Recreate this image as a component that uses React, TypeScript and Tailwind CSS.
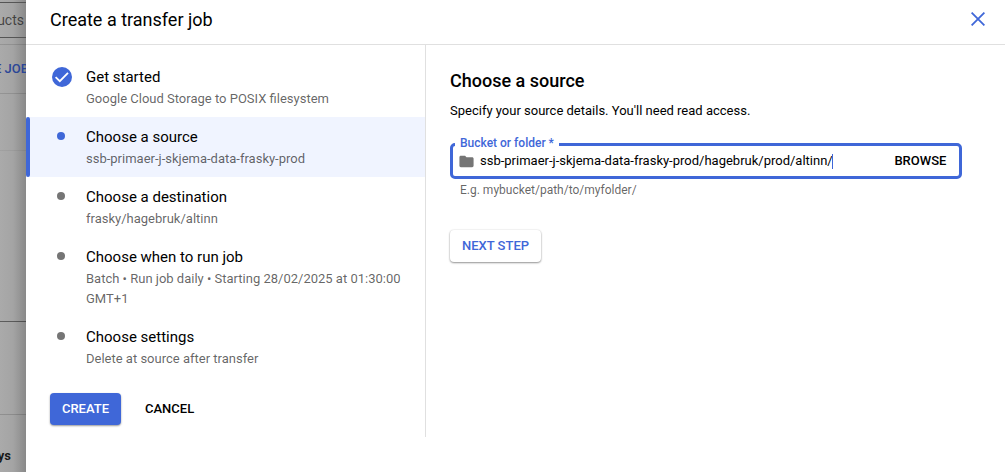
import React from "react";

type Step = { title: string; detail: string; state: "done" | "active" | "todo" };

const steps: Step[] = [
  { title: "Get started", detail: "Google Cloud Storage to POSIX filesystem", state: "done" },
  { title: "Choose a source", detail: "ssb-primaer-j-skjema-data-frasky-prod", state: "active" },
  { title: "Choose a destination", detail: "frasky/hagebruk/altinn", state: "todo" },
  { title: "Choose when to run job", detail: "Batch • Run job daily • Starting 28/02/2025 at 01:30:00 GMT+1", state: "todo" },
  { title: "Choose settings", detail: "Delete at source after transfer", state: "todo" },
];

function Marker({ state }: { state: Step["state"] }) {
  if (state === "done") {
    return (
      <svg className="mt-[10px] ml-[26px] size-5 shrink-0" viewBox="0 0 20 20">
        <circle cx="10" cy="10" r="10" fill="#3f67d8" />
        <path d="M3.6 10.2 7.8 14.2 16 5.8" fill="none" stroke="#fff" strokeWidth="1.8" />
      </svg>
    );
  }
  return (
    <span
      className={`mt-[15px] mr-[7px] ml-[31px] size-2 shrink-0 rounded-full ${state === "active" ? "bg-[#3f67d8]" : "bg-[#757575]"}`}
    />
  );
}

function StepRow({ step }: { step: Step }) {
  const active = step.state === "active";
  return (
    <li className={`flex ${active ? "bg-[#f0f4ff]" : ""}`}>
      {active && <span className="-mr-1 w-1 shrink-0 rounded-xs bg-[#3f67d8]" />}
      <Marker state={step.state} />
      <div className="ml-[14px] flex-1 pt-[10px] pr-5 pb-[8px]">
        <div className="text-[15px] leading-5 text-black">{step.title}</div>
        <div className="mt-[2px] text-[13px] leading-5 text-black/62">{step.detail}</div>
      </div>
    </li>
  );
}

function Backdrop() {
  return (
    <div className="flex w-[26px] shrink-0 flex-col overflow-hidden bg-linear-to-r from-[#aaaaaa] via-[#a4a4a4] to-[#898989] whitespace-nowrap">
      <div className="mt-[2px] flex h-9 items-center justify-end border-y border-[#555] pr-[2px] text-[14px] text-black/60">products</div>
      <div className="mt-[6px] flex h-[50px] items-center border-y border-black/12 text-[13px] font-medium text-[#2b4697]">
        <span className="-ml-[6px]">E JOB</span>
      </div>
      <div className="h-[57px] border-b border-black/5" />
      <div className="h-[171px] border-b border-black/45" />
      <div className="h-[93px] border-b border-black/15" />
      <div className="mt-[31px] flex justify-end pr-[15px] text-[13px] leading-5 font-bold text-black/87">days</div>
    </div>
  );
}

export default function App() {
  return (
    <div className="flex h-[472px] w-[1005px] overflow-hidden bg-white font-[Roboto,sans-serif] text-[13px] text-black">
      <Backdrop />
      <main className="flex flex-1 flex-col">
        <header className="flex h-[45px] items-center justify-between border-b border-[#e0e0e0] pr-5 pb-[5px] pl-6">
          <h1 className="text-[18px] leading-6">Create a transfer job</h1>
          <svg className="-mt-px size-[14px]" viewBox="0 0 14 14" stroke="#3f67d8" strokeWidth="1.8" fill="none">
            <path d="M.6.6 13.4 13.4M13.4.6.6 13.4" />
          </svg>
        </header>
        <div className="flex">
          <section className="h-[392px] w-[400px] border-r border-[#e0e0e0] pt-3">
            <ul>
              {steps.map((step) => (
                <StepRow key={step.title} step={step} />
              ))}
            </ul>
            <div className="mt-4 flex items-center pl-6 font-medium">
              <button className="h-8 w-[71px] rounded bg-[#3f67d8] text-white shadow-[0_1px_2px_rgba(0,0,0,0.4)]">CREATE</button>
              <button className="ml-6">CANCEL</button>
            </div>
          </section>
          <section className="pt-6 pl-6">
            <h2 className="text-[18px] leading-6 font-medium">Choose a source</h2>
            <p className="mt-2 leading-5">Specify your source details. You'll need read access.</p>
            <div className="relative mt-[22px] flex h-9 w-[512px] items-center rounded-[5px] border-[3px] border-[#3f67d8] pr-[12.6px] pl-[7px]">
              <label className="absolute -top-[10px] left-[2px] bg-white px-[5px] text-[12px] leading-[14px] font-medium text-[#3f67d8]">
                Bucket or folder *
              </label>
              <svg className="-ml-[2px] size-[17px]" viewBox="0 0 24 24" fill="#757575">
                <path d="M10 4H4c-1.1 0-2 .9-2 2v12c0 1.1.9 2 2 2h16c1.1 0 2-.9 2-2V8c0-1.1-.9-2-2-2h-8z" />
              </svg>
              <span className="ml-[5px]">ssb-primaer-j-skjema-data-frasky-prod/hagebruk/prod/altinn/</span>
              <span className="-ml-px h-[15px] w-px bg-[#3f67d8]" />
              <button className="ml-auto font-medium">BROWSE</button>
            </div>
            <p className="mt-px pl-[10px] text-[12px] leading-5 text-black/62">E.g. mybucket/path/to/myfolder/</p>
            <button className="mt-[30px] h-8 w-[91px] rounded bg-white font-medium text-[#3f67d8] shadow-[0_1px_2px_rgba(0,0,0,0.4),0_0_2px_rgba(0,0,0,0.12)]">
              NEXT STEP
            </button>
          </section>
        </div>
      </main>
    </div>
  );
}
